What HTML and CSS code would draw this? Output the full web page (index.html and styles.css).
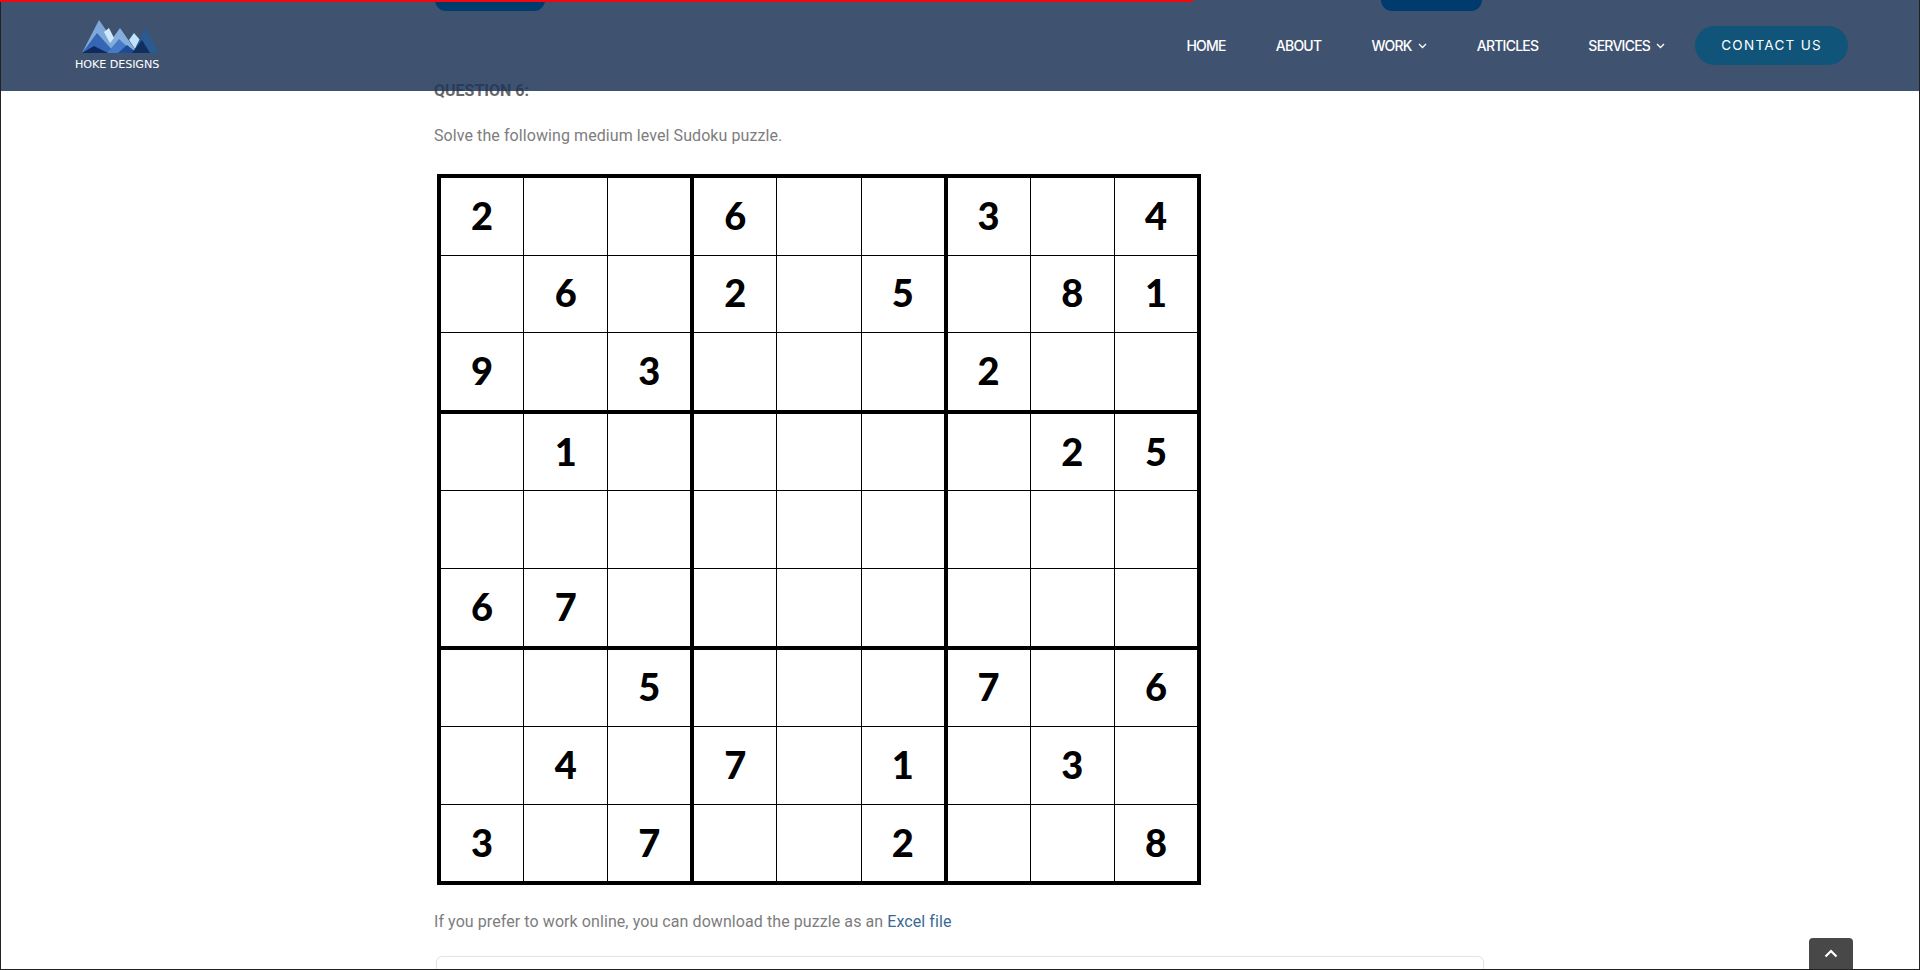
FILE: index.html
```html
<!DOCTYPE html>
<html lang="en">
<head>
    <meta charset="UTF-8">
    <meta name="viewport" content="width=device-width, initial-scale=1.0">
    <title>Hoke Designs - Question 6</title>
    <link rel="stylesheet" href="styles.css">
</head>
<body>
    <div class="progress-bar"></div>

    <header class="site-header">
        <a class="logo" href="#">
            <svg class="logo-mark" width="77" height="34" viewBox="0 0 77 34">
                <polygon points="0,33 17,0 40,33" fill="#7fa8da"/>
                <polygon points="28,22 38,8 54,31 36,33" fill="#86aedd"/>
                <polygon points="22,12 27,8 32,18 28,23" fill="#cfe9fa"/>
                <polygon points="47,20 52,13 58,20 53,29" fill="#bfe3f8"/>
                <polygon points="51,33 63,8 77,33" fill="#2a5a92"/>
                <polygon points="0,33 15,13 33,33" fill="#3566b4"/>
                <polygon points="25,33 37,19 52,33" fill="#4679c8"/>
                <polygon points="36,33 45,25 55,33" fill="#1f4a96"/>
                <polygon points="50,33 60,20 68,33" fill="#102f60"/>
                <polygon points="0,33 12,26 26,33" fill="#0e2a60"/>
            </svg>
            <span class="logo-text">HOKE DESIGNS</span>
        </a>
        <nav class="main-nav">
            <a href="#">HOME</a>
            <a href="#">ABOUT</a>
            <a href="#">WORK <svg class="caret" width="9" height="6" viewBox="0 0 9 6"><path d="M1 1 L4.5 4.5 L8 1" fill="none" stroke="#fff" stroke-width="1.3"/></svg></a>
            <a href="#">ARTICLES</a>
            <a href="#">SERVICES <svg class="caret" width="9" height="6" viewBox="0 0 9 6"><path d="M1 1 L4.5 4.5 L8 1" fill="none" stroke="#fff" stroke-width="1.3"/></svg></a>
            <a class="contact-btn" href="#">CONTACT US</a>
        </nav>
    </header>

    <main class="content">
        <div class="prev-buttons">
            <span class="prev-btn"></span>
            <span class="prev-btn prev-btn-right"></span>
        </div>

        <h4 class="question-title">QUESTION 6:</h4>
        <p class="question-text">Solve the following medium level Sudoku puzzle.</p>

        <table class="sudoku">
            <tr><td>2</td><td></td><td></td><td>6</td><td></td><td></td><td>3</td><td></td><td>4</td></tr>
            <tr><td></td><td>6</td><td></td><td>2</td><td></td><td>5</td><td></td><td>8</td><td>1</td></tr>
            <tr><td>9</td><td></td><td>3</td><td></td><td></td><td></td><td>2</td><td></td><td></td></tr>
            <tr><td></td><td>1</td><td></td><td></td><td></td><td></td><td></td><td>2</td><td>5</td></tr>
            <tr><td></td><td></td><td></td><td></td><td></td><td></td><td></td><td></td><td></td></tr>
            <tr><td>6</td><td>7</td><td></td><td></td><td></td><td></td><td></td><td></td><td></td></tr>
            <tr><td></td><td></td><td>5</td><td></td><td></td><td></td><td>7</td><td></td><td>6</td></tr>
            <tr><td></td><td>4</td><td></td><td>7</td><td></td><td>1</td><td></td><td>3</td><td></td></tr>
            <tr><td>3</td><td></td><td>7</td><td></td><td></td><td>2</td><td></td><td></td><td>8</td></tr>
        </table>

        <p class="download-text">If you prefer to work online, you can download the puzzle as an <a href="#">Excel file</a></p>

        <div class="answer-box"></div>
    </main>

    <a class="to-top" href="#">
        <svg width="14" height="9" viewBox="0 0 14 9"><path d="M1.5 7.5 L7 2 L12.5 7.5" fill="none" stroke="#fff" stroke-width="2.2"/></svg>
    </a>
</body>
</html>
```

FILE: styles.css
```css
html, body {
    margin: 0;
    height: 100%;
    overflow: hidden;
}

body {
    font-family: Roboto, Arial, sans-serif;
    font-size: 16px;
    color: #7d7d7d;
    background-color: #fff;
    border: 1px solid #222;
    border-top: none;
    box-sizing: border-box;
}

/* barra de progresso vermelha no topo */
.progress-bar {
    position: absolute;
    top: 0;
    left: 0;
    z-index: 20;
    width: 1193px;
    height: 2px;
    background-color: #f00811;
}

.site-header {
    position: absolute;
    top: 0;
    left: 1px;
    right: 1px;
    z-index: 10;
    height: 91px;
    display: flex;
    justify-content: space-between;
    align-items: center;
    padding: 0 71px 0 74px;
    background-color: rgba(29, 53, 88, 0.85);
}

.logo {
    display: flex;
    flex-direction: column;
    align-items: center;
    text-decoration: none;
}

.logo-mark {
    display: block;
    margin-left: 6px;
}

.logo-text {
    font-family: "DejaVu Sans", sans-serif;
    font-size: 11.2px;
    color: #fff;
    letter-spacing: -0.1px;
    margin-top: 4px;
}

.main-nav {
    display: flex;
    align-items: center;
}

.main-nav a {
    font-family: Inter, sans-serif;
    font-size: 14px;
    font-weight: 500;
    letter-spacing: -0.75px;
    color: #fff;
    text-decoration: none;
    margin-left: 50px;
}

.caret {
    margin-left: 3px;
    vertical-align: 2px;
}

.main-nav .contact-btn {
    margin-left: 30px;
    padding: 0 26px;
    height: 39px;
    line-height: 39px;
    border-radius: 20px;
    background-color: #115479;
    font-size: 13.5px;
    font-weight: 400;
    letter-spacing: 1.3px;
}

.content {
    width: 1048px;
    margin-left: 433px;
}

/* os botoes ficam acima do header na captura */
.prev-buttons {
    position: relative;
    z-index: 15;
    display: flex;
    height: 11px;
    overflow: hidden;
    margin-bottom: 70px;
    margin-left: 1px;
}

.prev-btn {
    width: 112px;
    height: 11px;
    border-radius: 0 0 13px 13px;
    background-color: #003b6e;
}

.prev-btn-right {
    width: 103px;
    margin-left: 836px;
}

.question-title {
    margin: 0;
    font-size: 16px;
    font-weight: 700;
    line-height: 19px;
    color: #666;
}

.question-text {
    margin: 26px 0 0;
    line-height: 19px;
    letter-spacing: 0.08px;
}

.sudoku {
    margin: 29px 0 0 3px;
    border-collapse: collapse;
    table-layout: fixed;
    width: 764px;
    border: 4px solid #000;
}

.sudoku td {
    height: 73.6px;
    padding: 0 0 3px;
    border: 1.5px solid #000;
    text-align: center;
    vertical-align: middle;
    font-family: Lato, sans-serif;
    font-size: 38px;
    font-weight: 900;
    line-height: 1;
    color: #000;
}

/* linhas grossas entre os blocos 3x3 */
.sudoku td:nth-child(3n) {
    border-right: 4px solid #000;
}

.sudoku tr:nth-child(3n) td {
    border-bottom: 4px solid #000;
}

.download-text {
    margin: 27px 0 0;
    line-height: 19px;
    letter-spacing: 0.08px;
}

.download-text a {
    color: #3a6a94;
    text-decoration: none;
}

.answer-box {
    width: 1046px;
    height: 40px;
    margin: 25px 0 0 2px;
    border: 1px solid #e2e2e2;
    border-radius: 6px;
}

.to-top {
    position: absolute;
    right: 67px;
    bottom: 1px;
    width: 44px;
    height: 31px;
    display: flex;
    justify-content: center;
    align-items: center;
    border-radius: 4px 4px 0 0;
    background-color: #484848;
}
```
